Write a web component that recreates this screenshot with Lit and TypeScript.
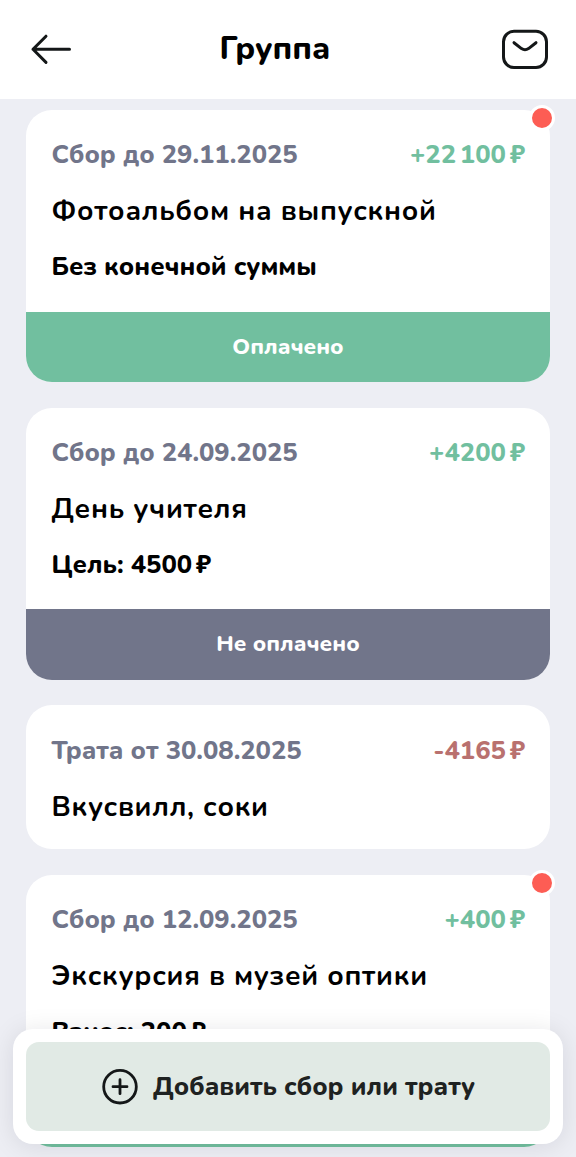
import { LitElement, html, css, nothing } from "lit";
import { customElement, property } from "lit/decorators.js";

interface Entry {
  label: string;
  amount: string;
  kind: "income" | "expense";
  title: string;
  note?: string;
  status?: "paid" | "unpaid";
  fresh?: boolean;
}

const THIN = "\u2009";

const ENTRIES: Entry[] = [
  { label: "Сбор до 29.11.2025", amount: `+22${THIN}100${THIN}₽`, kind: "income", title: "Фотоальбом на выпускной", note: "Без конечной суммы", status: "paid", fresh: true },
  { label: "Сбор до 24.09.2025", amount: `+4200${THIN}₽`, kind: "income", title: "День учителя", note: `Цель: 4500${THIN}₽`, status: "unpaid" },
  { label: "Трата от 30.08.2025", amount: `-4165${THIN}₽`, kind: "expense", title: "Вкусвилл, соки" },
  { label: "Сбор до 12.09.2025", amount: `+400${THIN}₽`, kind: "income", title: "Экскурсия в музей оптики", note: `Взнос: 200${THIN}₽`, status: "paid", fresh: true },
];

// Tightens the thin spaces between digit groups and before the currency sign.
const money = (text: string) =>
  text.split(THIN).map((part, i) => (i ? html`<span class="thin">${THIN}</span>${part}` : part));

@customElement("entry-card")
class EntryCard extends LitElement {
  @property({ attribute: false }) entry!: Entry;

  static styles = css`
    :host { display: block; position: relative; color: #000; }
    .card { border-radius: 26px; background: #fff; overflow: hidden; }
    .body { display: flex; flex-direction: column; gap: 20px; padding: 27.3px 26px 26.4px; }
    .body.short { padding-bottom: 24.7px; }
    .row { display: flex; justify-content: space-between; align-items: center; height: 36px; line-height: 36px; white-space: nowrap; }
    .meta { font-size: 25.6px; font-weight: 800; color: #71758a; }
    .label { margin-left: -0.5px; letter-spacing: -0.02px; }
    .amount { margin-right: -1px; }
    .thin { letter-spacing: -1.4px; }
    .income { color: #71bf9f; }
    .expense { color: #b9716f; }
    .title { font-size: 28px; font-weight: 700; letter-spacing: 0.74px; margin-left: -0.5px; }
    .note { font-size: 25.6px; font-weight: 800; margin-left: -0.5px; letter-spacing: -0.02px; }
    .status { display: flex; align-items: center; justify-content: center; height: 70.2px; font-size: 22.4px; line-height: 30px; font-weight: 800; color: #fff; }
    .paid { background: #71bf9f; }
    .unpaid { background: #71758a; }
    .dot { position: absolute; top: -5px; right: -5px; width: 20px; height: 20px; border: 3px solid #fff; border-radius: 50%; background: #fd5d54; }
  `;

  render() {
    const e = this.entry;
    return html`
      <div class="card">
        <div class="body ${e.note ? "" : "short"}">
          <div class="row meta"><span class="label">${e.label}</span><span class="amount ${e.kind}">${money(e.amount)}</span></div>
          <div class="row title"><span>${e.title}</span></div>
          ${e.note ? html`<div class="row note"><span>${money(e.note)}</span></div>` : nothing}
        </div>
        ${e.status ? html`<div class="status ${e.status}">${e.status === "paid" ? "Оплачено" : "Не оплачено"}</div>` : nothing}
      </div>
      ${e.fresh ? html`<span class="dot"></span>` : nothing}
    `;
  }
}

@customElement("app-root")
class AppRoot extends LitElement {
  static styles = css`
    :host { display: flex; flex-direction: column; position: relative; height: 100vh; overflow: hidden; background: #edeef4; font-family: Nunito, "Noto Sans", sans-serif; }
    .header { flex: none; display: grid; grid-template-columns: 60px 1fr 60px; align-items: center; height: 99px; box-sizing: border-box; padding: 0 26px 1px; background: #fff; }
    .heading { margin: 0; justify-self: center; padding-right: 26px; font-size: 32px; font-weight: 800; line-height: 40px; color: #000; }
    .icon { display: block; fill: none; stroke: #141718; stroke-linecap: round; stroke-linejoin: round; }
    .mail { justify-self: end; }
    .list { display: flex; flex-direction: column; gap: 25.8px; padding: 11px 26px 0; }
    .dock { position: absolute; left: 13px; right: 13px; bottom: 13px; height: 115px; box-sizing: border-box; padding: 13px; border-radius: 20px; background: #fff; box-shadow: 0 2px 26px rgba(20, 20, 30, 0.1); }
    .add { display: flex; align-items: center; justify-content: center; gap: 15px; width: 100%; height: 89px; padding: 0 0 0 1px; border: 0; border-radius: 13px; background: #e1eae5; color: #1e2221; font-family: inherit; font-size: 25.6px; font-weight: 800; white-space: nowrap; }
  `;

  render() {
    return html`
      <header class="header">
        <svg class="icon" width="50" height="40" viewBox="0 0 50 40" stroke-width="3">
          <path d="M43.500 20.300H7M20 7.200L7 20.300L20 33.400"></path>
        </svg>
        <h1 class="heading">Группа</h1>
        <svg class="icon mail" width="50" height="40" viewBox="0 0 50 40" stroke-width="3">
          <rect x="3.500" y="2.300" width="43" height="36.200" rx="10.500"></rect>
          <path d="M14 13.700l7.500 5.900q3.500 2.400 7 0l7.500-5.900"></path>
        </svg>
      </header>
      <main class="list">${ENTRIES.map((e) => html`<entry-card .entry=${e}></entry-card>`)}</main>
      <div class="dock">
        <button class="add">
          <svg class="icon" width="36" height="36" viewBox="0 0 36 36" stroke-width="2.800">
            <circle cx="18" cy="17.700" r="16.300"></circle>
            <path d="M18 10.700v14M11 17.700h14"></path>
          </svg>
          <span>Добавить сбор или трату</span>
        </button>
      </div>
    `;
  }
}
